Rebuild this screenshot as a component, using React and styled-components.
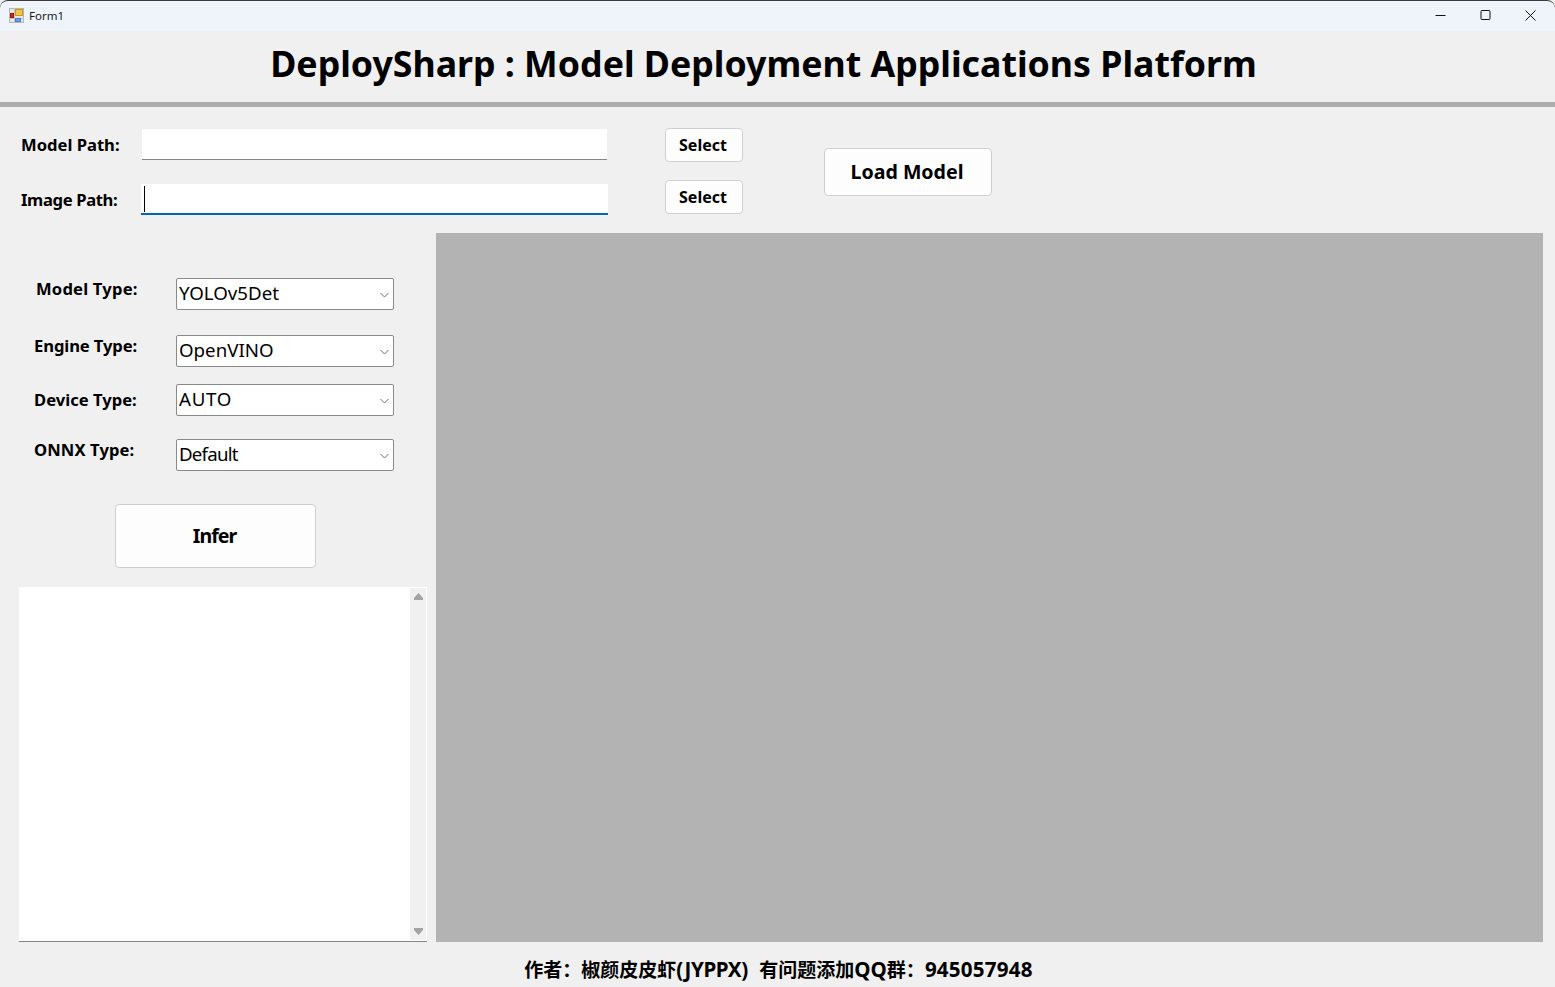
import React from "react";
import styled, { createGlobalStyle } from "styled-components";

const GlobalStyle = createGlobalStyle`
  html, body {
    margin: 0;
    padding: 0;
    background: #f0f0f0;
    overflow: hidden;
  }
  body {
    font-family: "Noto Sans", "Noto Sans CJK SC", sans-serif;
    color: #000;
  }
`;

const Window = styled.div`
  width: 1555px;
  height: 987px;
  display: flex;
  flex-direction: column;
  background: #f0f0f0;
  overflow: hidden;
`;

const TitleBar = styled.div`
  height: 31px;
  flex: none;
  box-sizing: border-box;
  display: flex;
  align-items: center;
  padding: 0 2px 2px 9px;
  background: #eff4fb;
  border-top: 1px solid #3c3c3c;
  border-radius: 8px 8px 0 0;
  font-size: 11.5px;
  color: #1a1a1a;
`;

const Caption = styled.span`
  margin-left: 5px;
  flex: 1;
`;

const WindowButton = styled.div`
  width: 45px;
  height: 28px;
  display: flex;
  align-items: center;
  justify-content: center;
`;

const Header = styled.h1`
  margin: 0;
  height: 71px;
  flex: none;
  display: flex;
  align-items: center;
  justify-content: center;
  font-size: 35.7px;
  font-weight: 700;
  padding: 0 28px 8px 0;
  box-sizing: border-box;
`;

const Divider = styled.div`
  height: 5px;
  flex: none;
  background: #adadad;
`;

const PathBar = styled.div`
  height: 126px;
  flex: none;
  display: flex;
  align-items: flex-start;
`;

const PathLabels = styled.div`
  width: 142px;
  padding: 27px 0 0 21px;
  box-sizing: border-box;
  display: flex;
  flex-direction: column;
  gap: 33px;
`;

const FieldLabel = styled.label`
  display: block;
  font-size: 16.6px;
  font-weight: 700;
  line-height: 22px;
  white-space: nowrap;
  letter-spacing: ${(p) => p.$track || 0}px;
`;

const PathInputs = styled.div`
  width: 465px;
  padding-top: 22px;
  display: flex;
  flex-direction: column;
  gap: 24px;
`;

const PathInput = styled.div`
  height: 31px;
  box-sizing: border-box;
  margin: 0 ${(p) => (p.$focused ? "-1px" : "0")};
  background: #fff;
  border-bottom: ${(p) => (p.$focused ? "2px solid #0067c0" : "1px solid #868686")};
  display: flex;
  align-items: center;
  padding-left: ${(p) => (p.$focused ? "3px" : "2px")};
`;

const Caret = styled.i`
  display: block;
  width: 1px;
  height: 26px;
  background: #000;
`;

const SelectButtons = styled.div`
  margin-left: 58px;
  padding-top: 21px;
  display: flex;
  flex-direction: column;
  gap: 18px;
`;

const PushButton = styled.button`
  display: block;
  padding: 0 2px 0 0;
  box-sizing: border-box;
  width: ${(p) => p.$w}px;
  height: ${(p) => p.$h}px;
  background: #fdfdfd;
  border: 1px solid #d0d0d0;
  border-radius: 4px;
  font-family: inherit;
  font-size: ${(p) => p.$size}px;
  font-weight: 700;
  color: #000;
`;

const LoadButton = styled(PushButton)`
  margin: 41px 0 0 81px;
  padding-bottom: 2px;
`;

const InferButton = styled(PushButton)`
  margin: 33px 0 0 115px;
  padding-bottom: 2px;
  letter-spacing: -1px;
`;

const Main = styled.div`
  height: 709px;
  flex: none;
  display: flex;
`;

const LeftPanel = styled.div`
  width: 436px;
  flex: none;
  padding-top: 45px;
  box-sizing: border-box;
`;

const OptionRow = styled.div`
  height: 32px;
  display: flex;
  align-items: center;
  margin-top: ${(p) => p.$top || 0}px;
`;

const OptionLabel = styled(FieldLabel)`
  width: ${(p) => 176 - p.$indent}px;
  margin-left: ${(p) => p.$indent}px;
  padding-bottom: ${(p) => p.$lift}px;
`;

const ComboBox = styled.div`
  width: 218px;
  height: 32px;
  box-sizing: border-box;
  background: #fff;
  border: 1px solid #8a8a8a;
  border-radius: 2px;
  display: flex;
  align-items: center;
  justify-content: space-between;
  padding: 0 4px 0 2px;
  font-size: 18.7px;
  line-height: 28px;
`;

const ComboText = styled.span`
  margin-bottom: 2px;
  letter-spacing: ${(p) => p.$track || 0}px;
`;

const ComboArrow = styled.svg`
  margin-top: 2px;
`;

const LogBox = styled.div`
  margin: 19px 0 0 19px;
  width: 408px;
  height: 355px;
  box-sizing: border-box;
  background: #fff;
  border-bottom: 1px solid #868686;
  display: flex;
  justify-content: flex-end;
  padding: 1px 1px 1px 0;
`;

const ScrollTrack = styled.div`
  width: 16px;
  background: #f0f0f0;
  display: flex;
  flex-direction: column;
  justify-content: space-between;
  align-items: center;
  padding: 5px 0;
  box-sizing: border-box;
`;

const Preview = styled.div`
  width: 1107px;
  flex: none;
  background: #b3b3b3;
`;

const Footer = styled.footer`
  flex: 1;
  display: flex;
  align-items: center;
  justify-content: center;
  padding: 8px 0 0 2px;
  box-sizing: border-box;
  font-size: 19px;
  font-weight: 700;
  white-space: pre;
`;

const Latin = styled.span`
  font-size: 20.6px;
  letter-spacing: ${(p) => p.$track || 0}px;
  margin-right: ${(p) => p.$after || 0}px;
`;

const FormIcon = () => (
  <svg width="15" height="15" viewBox="0 0 15 15">
    <rect x="0.5" y="0.5" width="14" height="14" fill="#e6e6e6" stroke="#b5b5b5" />
    <path d="M0 5.5H6M0 10.5H15M5.5 0V15M10.5 10V15" stroke="#c4c4c4" />
    <rect x="6.5" y="1.5" width="7" height="6" fill="#f4c542" stroke="#c99a1c" />
    <rect x="1.5" y="5.5" width="3" height="4" fill="#d8261c" stroke="#8f1610" />
    <rect x="6.5" y="10.5" width="5" height="3" fill="#6f9fe8" stroke="#4a7bc8" />
  </svg>
);

const Chevron = () => (
  <ComboArrow width="9" height="6" viewBox="0 0 9 6" fill="none" stroke="#6e6e6e">
    <path d="M0.5 1L4.5 5L8.5 1" />
  </ComboArrow>
);

const ScrollArrow = ({ down }) => (
  <svg width="9" height="7" viewBox="0 0 9 7" fill="#a3a3a3">
    <path d={down ? "M0 0H9V2L4.5 7L0 2Z" : "M4.5 0L9 5V7H0V5Z"} />
  </svg>
);

const options = [
  { label: "Model Type:", value: "YOLOv5Det", indent: 36, lift: 11, top: 0, track: 0.2 },
  { label: "Engine Type:", value: "OpenVINO", indent: 34, lift: 11, top: 25, track: -0.1 },
  { label: "Device Type:", value: "AUTO", indent: 34, lift: 0, top: 17, valueTrack: 0.75 },
  { label: "ONNX Type:", value: "Default", indent: 34, lift: 10, top: 23, track: 0.1, valueTrack: -0.8 },
];

const App = () => {
  return (
    <Window>
      <GlobalStyle />
      <TitleBar>
        <FormIcon />
        <Caption>Form1</Caption>
        <WindowButton>
          <svg width="11" height="11" viewBox="0 0 11 11" stroke="#111" fill="none">
            <path d="M0.5 5.5H10.5" />
          </svg>
        </WindowButton>
        <WindowButton>
          <svg width="11" height="11" viewBox="0 0 11 11" stroke="#111" fill="none">
            <rect x="1" y="0.5" width="9" height="9" rx="1" />
          </svg>
        </WindowButton>
        <WindowButton>
          <svg width="11" height="11" viewBox="0 0 11 11" stroke="#111" fill="none">
            <path d="M0.5 0.5L10.5 10.5M10.5 0.5L0.5 10.5" />
          </svg>
        </WindowButton>
      </TitleBar>

      <Header>DeploySharp : Model Deployment Applications Platform</Header>
      <Divider />

      <PathBar>
        <PathLabels>
          <FieldLabel>Model Path:</FieldLabel>
          <FieldLabel $track={-0.35}>Image Path:</FieldLabel>
        </PathLabels>
        <PathInputs>
          <PathInput />
          <PathInput $focused>
            <Caret />
          </PathInput>
        </PathInputs>
        <SelectButtons>
          <PushButton $w={78} $h={34} $size={16}>Select</PushButton>
          <PushButton $w={78} $h={34} $size={16}>Select</PushButton>
        </SelectButtons>
        <LoadButton $w={168} $h={48} $size={19.6}>Load Model</LoadButton>
      </PathBar>

      <Main>
        <LeftPanel>
          {options.map((o) => (
            <OptionRow key={o.label} $top={o.top}>
              <OptionLabel $indent={o.indent} $lift={o.lift} $track={o.track}>{o.label}</OptionLabel>
              <ComboBox>
                <ComboText $track={o.valueTrack}>{o.value}</ComboText>
                <Chevron />
              </ComboBox>
            </OptionRow>
          ))}
          <InferButton $w={201} $h={64} $size={19.6}>Infer</InferButton>
          <LogBox>
            <ScrollTrack>
              <ScrollArrow />
              <ScrollArrow down />
            </ScrollTrack>
          </LogBox>
        </LeftPanel>
        <Preview />
      </Main>

      <Footer>
        作者：椒颜皮皮虾<Latin $track={-0.4} $after={1.5}>(JYPPX)  </Latin>有问题添加<Latin>QQ</Latin>群：<Latin $track={0.22}>945057948</Latin>
      </Footer>
    </Window>
  );
};

export default App;
